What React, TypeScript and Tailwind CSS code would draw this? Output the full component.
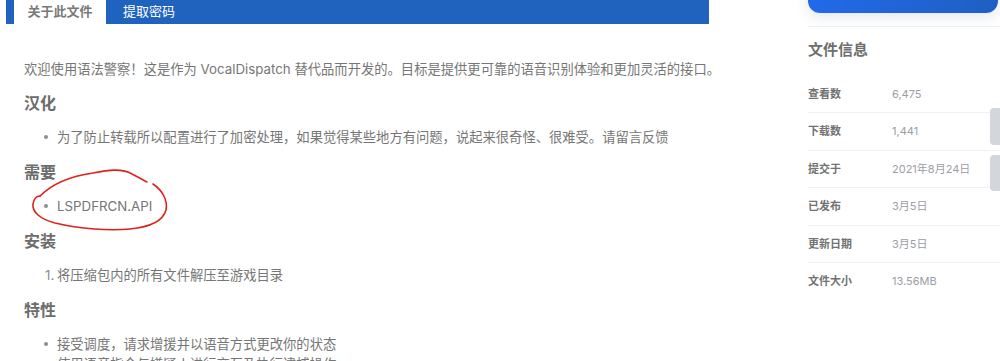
import React from 'react';

const FONT = '"Inter", "Noto Sans CJK SC", "Noto Sans", sans-serif';

const fileInfo = [
  { label: '查看数', value: '6,475' },
  { label: '下载数', value: '1,441' },
  { label: '提交于', value: '2021年8月24日' },
  { label: '已发布', value: '3月5日' },
  { label: '更新日期', value: '3月5日' },
  { label: '文件大小', value: '13.56MB' },
];

const Bullet: React.FC<{ children: React.ReactNode }> = ({ children }) => (
  <li className="flex items-center h-[20px] leading-[20px]">
    <span className="w-[4px] h-[4px] rounded-full bg-[#8e8e8e] ml-[20px] mr-[9px] shrink-0"></span>
    <span>{children}</span>
  </li>
);

const Heading: React.FC<{ children: React.ReactNode }> = ({ children }) => (
  <h3 className="text-[16px] leading-[24px] font-bold text-[#6c6c6c] mb-[12px]">{children}</h3>
);

const App: React.FC = () => {
  return (
    <div className="relative w-[1000px] h-[361px] overflow-hidden bg-white" style={{ fontFamily: FONT }}>
      <div className="flex">
        {/* Main column */}
        <main className="w-[760px] shrink-0">
          {/* Tabs */}
          <div className="ml-[6px] w-[703px] h-[24px] bg-[#1f63be] flex items-stretch pl-[8px]">
            <div className="w-[92px] bg-white flex items-center justify-center text-[13px] font-bold text-[#7a7a7a]">
              关于此文件
            </div>
            <div className="flex items-center pl-[17px] text-[13px] text-white">提取密码</div>
          </div>

          <div className="pl-[24px] pt-[35px] text-[13.3px] text-[#767676]">
            <p className="leading-[20px] mb-[12px] whitespace-nowrap">
              欢迎使用语法警察！这是作为 VocalDispatch 替代品而开发的。目标是提供更可靠的语音识别体验和更加灵活的接口。
            </p>

            <Heading>汉化</Heading>
            <ul className="mb-[13px]">
              <Bullet>为了防止转载所以配置进行了加密处理，如果觉得某些地方有问题，说起来很奇怪、很难受。请留言反馈</Bullet>
            </ul>

            <Heading>需要</Heading>
            <ul className="mb-[13px]">
              <Bullet>LSPDFRCN.API</Bullet>
            </ul>

            <Heading>安装</Heading>
            <ol className="mb-[13px]">
              <li className="flex h-[20px] leading-[20px]">
                <span className="ml-[21px] w-[12px] text-[#8e8e8e]">1.</span>
                <span>将压缩包内的所有文件解压至游戏目录</span>
              </li>
            </ol>

            <Heading>特性</Heading>
            <ul>
              <Bullet>接受调度，请求增援并以语音方式更改你的状态</Bullet>
              <Bullet>使用语音指令与嫌疑人进行交互及执行逮捕操作</Bullet>
            </ul>
          </div>
        </main>

        {/* Sidebar */}
        <aside className="ml-[48px] flex-1 flex flex-col">
          <button className="mt-[-32px] w-[190px] h-[45px] rounded-[12px] bg-gradient-to-r from-[#2369ea] to-[#1f5fc2] text-white text-[16px] font-bold flex items-start justify-center pt-[8px] shadow-[0_4px_14px_rgba(30,60,120,0.12)]">
            下载
          </button>
          <div className="mt-[13px] h-px bg-[#eef0f4]"></div>

          <h2 className="mt-[13px] text-[15px] leading-[20px] font-bold text-[#6e6e6e]">文件信息</h2>

          <div className="mt-[16px]">
            {fileInfo.map((row, i) => (
              <div
                key={row.label}
                className={`flex items-center h-[37.4px] text-[11px] ${i < fileInfo.length - 1 ? 'border-b border-[#f1f2f5]' : ''}`}
              >
                <span className="w-[84px] font-bold text-[#727272]">{row.label}</span>
                <span className="text-[#9c9da5]">{row.value}</span>
              </div>
            ))}
          </div>
        </aside>
      </div>

      {/* floating tabs at right edge */}
      <div className="absolute right-0 top-[108px] w-[10px] h-[37px] rounded-l-[4px] bg-[#d3d6db]"></div>
      <div className="absolute right-0 top-[155px] w-[10px] h-[36px] rounded-l-[4px] bg-[#d3d6db]"></div>

      {/* hand-drawn red annotation */}
      <svg className="absolute left-0 top-0 pointer-events-none" width="1000" height="361" viewBox="0 0 1000 361">
        <path
          d="M40 196 C 52 184, 72 176, 93 173 C 108 170, 122 168, 132 174 C 138 177, 143 180, 147 182"
          fill="none"
          stroke="#e0201b"
          strokeWidth="1.6"
          strokeLinecap="round"
        />
        <path
          d="M153 184 C 162 190, 168 200, 166 210 C 163 221, 150 227, 130 229 C 110 231, 80 229, 55 223 C 40 219, 32 212, 33 204 C 34 198, 37 196, 40 196"
          fill="none"
          stroke="#e0201b"
          strokeWidth="1.6"
          strokeLinecap="round"
        />
      </svg>
    </div>
  );
};

export default App;
